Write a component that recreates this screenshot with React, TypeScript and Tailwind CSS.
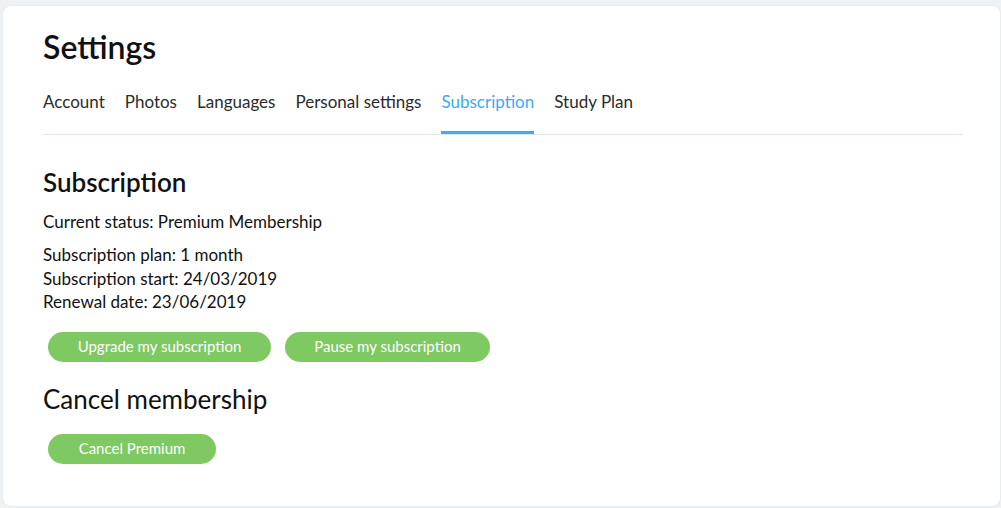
import React from "react";

const tabs = ["Account", "Photos", "Languages", "Personal settings", "Subscription", "Study Plan"];

function Btn({ children, w }: { children: React.ReactNode; w: string }) {
  return (
    <button className={`h-[30px] ${w} rounded-full bg-[#7ec962] text-white text-[15px] leading-none`}>
      {children}
    </button>
  );
}

export default function App() {
  return (
    <div className="min-h-[508px] w-[1001px] bg-[#eef2f5] pl-[3px] pt-[6px] overflow-hidden" style={{ fontFamily: "Lato, 'Open Sans', sans-serif" }}>
      <div className="h-[500px] w-[997px] rounded-[8px] bg-white shadow-[0_0_2px_rgba(0,0,0,0.08)] pl-[40px] pr-[37px] pt-[22px]">
        <h1 className="text-[32px] font-semibold leading-[38px] text-[#111]">Settings</h1>
        <div className="mt-[26px] flex gap-[20px] border-b border-[#e0e6ed]">
          {tabs.map((t) => (
            <div
              key={t}
              className={`text-[17px] leading-[20px] ${
                t === "Subscription" ? "pb-[19px] text-[#3fa9f5] border-b-[3px] border-[#3fa9f5]" : "pb-[22px] text-[#2b2b2b]"
              }`}
            >
              {t}
            </div>
          ))}
        </div>
        <h2 className="mt-[32px] text-[26px] font-semibold leading-[30px] text-[#111]">Subscription</h2>
        <p className="mt-[14px] text-[17px] leading-[22px] text-[#111]">Current status: Premium Membership</p>
        <div className="mt-[10px] text-[17px] leading-[23.5px] text-[#111]">
          <p>Subscription plan: 1 month</p>
          <p>Subscription start: 24/03/2019</p>
          <p>Renewal date: 23/06/2019</p>
        </div>
        <div className="mt-[18px] ml-[5px] flex gap-[14px]">
          <Btn w="w-[223px]">Upgrade my subscription</Btn>
          <Btn w="w-[205px]">Pause my subscription</Btn>
        </div>
        <h2 className="mt-[22px] text-[26px] font-normal leading-[30px] text-[#111]">Cancel membership</h2>
        <div className="mt-[20px] ml-[5px] flex">
          <Btn w="w-[168px]">Cancel Premium</Btn>
        </div>
      </div>
    </div>
  );
}
